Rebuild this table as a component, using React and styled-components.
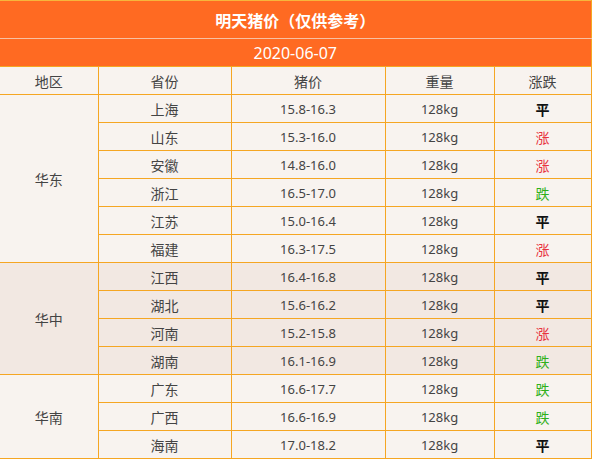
import React from "react";
import styled, { createGlobalStyle } from "styled-components";

const Global = createGlobalStyle`
  html, body { margin: 0; padding: 0; background: #ffffff; }
  body { font-family: "Noto Sans", "Noto Sans CJK SC", sans-serif; }
`;

const Table = styled.table`
  width: 591px;
  border-collapse: collapse;
  table-layout: fixed;
  border-top: 1px solid #f7b53c;
  font-size: 13px;
  color: #444;
`;

const TitleCell = styled.th`
  height: 37px;
  padding: 0;
  background: #ff6a22;
  color: #fff;
  font-size: 16px;
  font-weight: bold;
  text-align: center;
  border-bottom: 1px solid #f7c0a4;
  border-right: 1px solid #f5a623;
  font-family: "Noto Sans CJK SC", sans-serif;
`;

const DateCell = styled.th`
  height: 27px;
  padding: 0;
  background: #ff6a22;
  color: #fff;
  font-size: 16px;
  font-weight: normal;
  text-align: center;
  border-right: 1px solid #f5a623;
`;

const Row = styled.tr`
  background: ${(p) => (p.$shade ? "#f2e8e2" : "#f8f3ef")};
`;

const Cell = styled.td`
  height: 27px;
  padding: 0;
  text-align: center;
  border: 1px solid #f5a623;
  border-left: ${(p) => (p.$first ? "none" : "1px solid #f5a623")};
  vertical-align: middle;
  font-size: ${(p) => (p.$cjk ? "14px" : "13px")};
  font-family: ${(p) =>
    p.$cjk ? '"Noto Sans CJK SC", sans-serif' : '"Noto Sans", sans-serif'};
`;

const Trend = styled.span`
  font-family: "Noto Sans CJK SC", sans-serif;
  font-weight: ${(p) => (p.$kind === "平" ? "bold" : "normal")};
  color: ${(p) =>
    p.$kind === "涨" ? "#e8333f" : p.$kind === "跌" ? "#2fb01a" : "#111"};
`;

const groups = [
  {
    region: "华东",
    shade: false,
    rows: [
      ["上海", "15.8-16.3", "平"],
      ["山东", "15.3-16.0", "涨"],
      ["安徽", "14.8-16.0", "涨"],
      ["浙江", "16.5-17.0", "跌"],
      ["江苏", "15.0-16.4", "平"],
      ["福建", "16.3-17.5", "涨"],
    ],
  },
  {
    region: "华中",
    shade: true,
    rows: [
      ["江西", "16.4-16.8", "平"],
      ["湖北", "15.6-16.2", "平"],
      ["河南", "15.2-15.8", "涨"],
      ["湖南", "16.1-16.9", "跌"],
    ],
  },
  {
    region: "华南",
    shade: false,
    rows: [
      ["广东", "16.6-17.7", "跌"],
      ["广西", "16.6-16.9", "跌"],
      ["海南", "17.0-18.2", "平"],
    ],
  },
];

export default function App() {
  return (
    <>
      <Global />
      <Table>
        <colgroup>
          <col style={{ width: 98 }} />
          <col style={{ width: 133 }} />
          <col style={{ width: 154 }} />
          <col style={{ width: 109 }} />
          <col style={{ width: 97 }} />
        </colgroup>
        <thead>
          <tr>
            <TitleCell colSpan={5}>明天猪价（仅供参考）</TitleCell>
          </tr>
          <tr>
            <DateCell colSpan={5}>2020-06-07</DateCell>
          </tr>
        </thead>
        <tbody>
          <Row>
            <Cell $first $cjk>地区</Cell>
            <Cell $cjk>省份</Cell>
            <Cell $cjk>猪价</Cell>
            <Cell $cjk>重量</Cell>
            <Cell $cjk>涨跌</Cell>
          </Row>
          {groups.map((g) =>
            g.rows.map((r, i) => (
              <Row key={g.region + r[0]} $shade={g.shade}>
                {i === 0 && (
                  <Cell $first $cjk rowSpan={g.rows.length}>
                    {g.region}
                  </Cell>
                )}
                <Cell $cjk>{r[0]}</Cell>
                <Cell>{r[1]}</Cell>
                <Cell>128kg</Cell>
                <Cell $cjk>
                  <Trend $kind={r[2]}>{r[2]}</Trend>
                </Cell>
              </Row>
            ))
          )}
        </tbody>
      </Table>
    </>
  );
}
